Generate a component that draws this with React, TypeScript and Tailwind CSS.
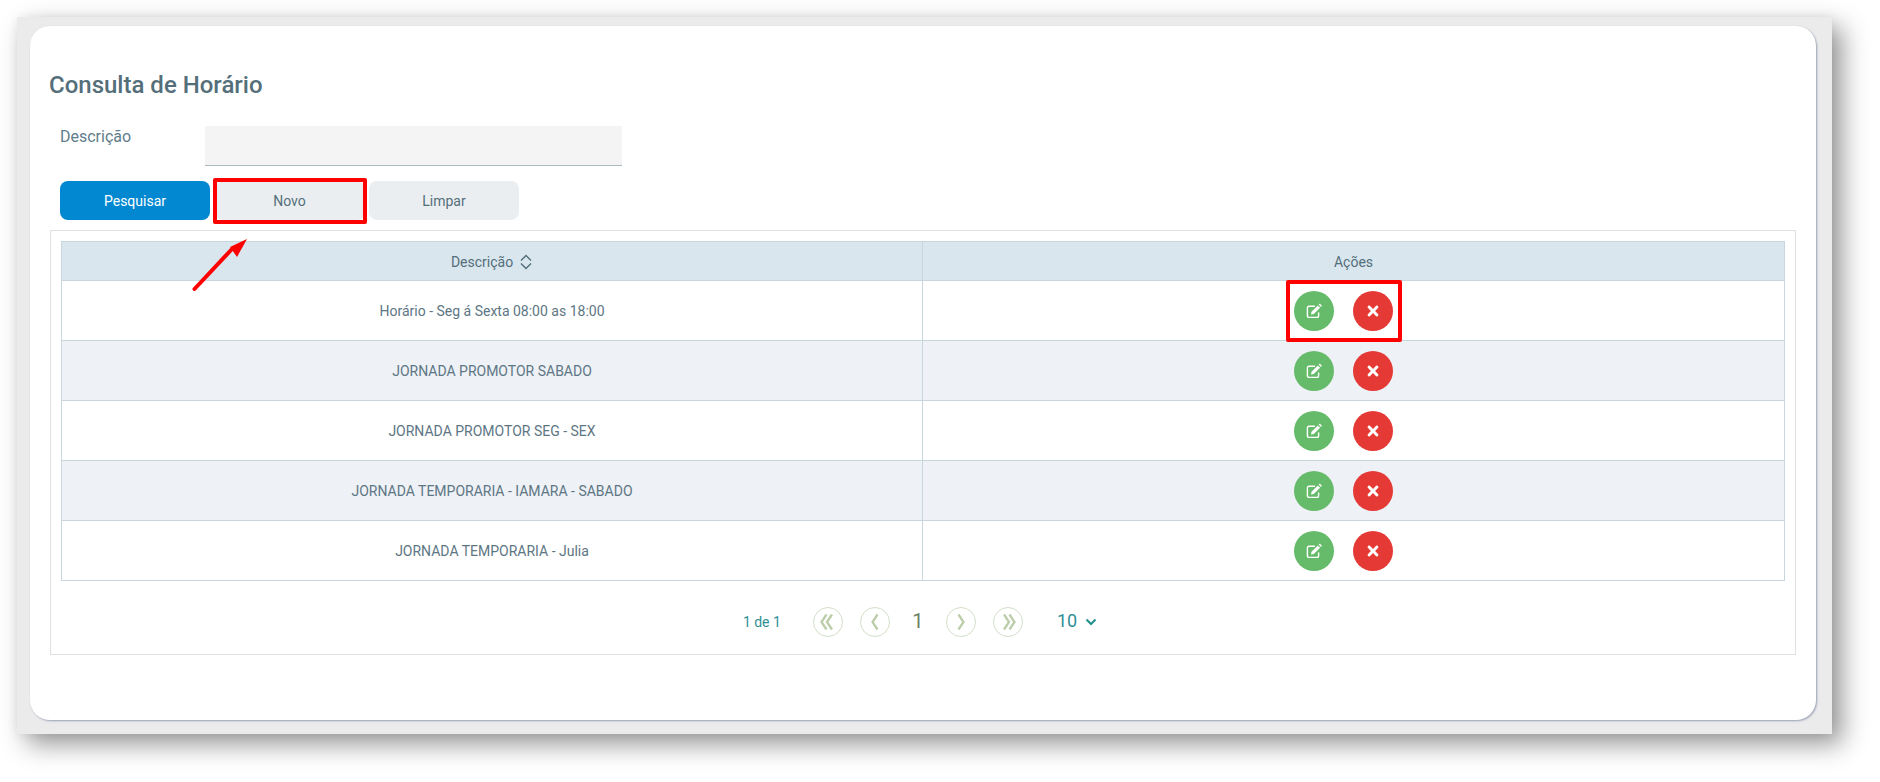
import { FaTimes } from "react-icons/fa";

const rows = [
  "Horário - Seg á Sexta 08:00 as 18:00",
  "JORNADA PROMOTOR SABADO",
  "JORNADA PROMOTOR SEG - SEX",
  "JORNADA TEMPORARIA - IAMARA - SABADO",
  "JORNADA TEMPORARIA - Julia",
];

function EditIcon() {
  return (
    <svg viewBox="0 0 16 16" className="w-4 h-4">
      <path d="M9 3.2H3a1.6 1.6 0 0 0-1.6 1.6v8A1.6 1.6 0 0 0 3 14.4h8a1.6 1.6 0 0 0 1.6-1.6V9.5" fill="none" stroke="white" strokeWidth="1.4" />
      <path d="M5.5 8.7 11.8 2.4l2.3 2.3-6.3 6.3-2.8.5zM12.6 1.6l.7-.6c.3-.2.6-.2.9 0l1.4 1.4c.2.3.2.6 0 .9l-.7.6z" fill="white" />
    </svg>
  );
}

function RowActions() {
  return (
    <>
      <button className="w-10 h-10 rounded-full bg-[#66bb6a] text-white flex items-center justify-center mr-[19px]">
        <EditIcon />
      </button>
      <button className="w-10 h-10 rounded-full bg-[#e53935] text-white flex items-center justify-center mr-[20px]">
        <FaTimes className="w-4 h-4" />
      </button>
    </>
  );
}

function PageButton({ d }: { d: string }) {
  return (
    <button className="w-[30px] h-[30px] rounded-full border border-[#d3dfc8] flex items-center justify-center">
      <svg viewBox="0 0 20 20" className="w-5 h-5" fill="none" stroke="#bccdaa" strokeWidth="2.3">
        <path d={d} />
      </svg>
    </button>
  );
}

export default function App() {
  return (
    <div className="w-[1880px] h-[782px] bg-white pt-[17px] pl-[17px] overflow-hidden font-['Roboto',sans-serif]">
      <div className="w-[1815px] h-[717px] bg-[#ebebeb] pt-[9px] pl-[13px] shadow-[10px_10px_24px_rgba(0,0,0,0.42),0_0_10px_rgba(0,0,0,0.05)]">
        <div className="relative w-[1786px] h-[694px] bg-white rounded-[20px] pt-[43px] pl-[20px] shadow-[1px_1px_2px_rgba(120,130,160,0.7)]">
          <h1 className="text-2xl leading-8 font-medium text-[#546e7a] -ml-[1px]">Consulta de Horário</h1>

          {/* Filtro */}
          <div className="flex mt-[25px] pl-[10px]">
            <label className="w-[145px] text-base leading-[22px] text-[#607d8b]">Descrição</label>
            <input className="w-[417px] h-10 bg-[#f4f4f4] border-b border-[#a9bac0]" />
          </div>

          <div className="flex gap-[4.5px] mt-[15px] pl-[10px] text-sm">
            <button className="w-[150px] h-[39px] rounded-lg bg-[#0288d1] text-white">Pesquisar</button>
            <div className="relative w-[150px] h-[39px]">
              <button className="w-full h-full rounded-lg bg-[#ebeef1] text-[#546e7a]">Novo</button>
              <div className="absolute -left-[2px] -right-[2px] -top-[3px] -bottom-[4px] border-4 border-[#fe0000] rounded-[2px]" />
            </div>
            <button className="w-[150px] h-[39px] rounded-lg bg-[#ebeef1] text-[#546e7a]">Limpar</button>
          </div>

          {/* Lista */}
          <div className="w-[1746px] h-[425px] mt-[10px] border border-[#e0e0e0] pt-[10px] pl-[10px]">
            <table className="w-[1724px] table-fixed border-collapse text-sm text-[#5d7684]">
              <colgroup>
                <col className="w-[861px]" />
                <col />
              </colgroup>
              <thead>
                <tr className="h-[39px] bg-[#d9e6ee] text-[#546e7a]">
                  <th className="font-normal border border-[#c8d6de] pt-[1px]">
                    <span className="inline-flex items-center gap-[6px]">
                      Descrição
                      <svg viewBox="0 0 14 16" className="w-[14px] h-4" fill="none" stroke="#546e7a" strokeWidth="1.4">
                        <path d="M2 6.5 7 1.5l5 5M2 9.5l5 5 5-5" />
                      </svg>
                    </span>
                  </th>
                  <th className="font-normal border border-[#c8d6de] pt-[1px]">Ações</th>
                </tr>
              </thead>
              <tbody>
                {rows.map((r, i) => (
                  <tr key={r} className={i % 2 === 1 ? "h-[60px] bg-[#eef1f6]" : "h-[60px] bg-white"}>
                    <td className="text-center border border-[#c8d6de] pt-[1px]">{r}</td>
                    <td className="border border-[#c8d6de] pt-[1px]">
                      <div className="flex justify-center">
                        {i === 0 ? (
                          <div className="relative flex">
                            <RowActions />
                            <div className="absolute -left-[8px] right-[11px] -top-[11px] -bottom-[11px] border-4 border-[#fe0000] rounded-[2px]" />
                          </div>
                        ) : (
                          <RowActions />
                        )}
                      </div>
                    </td>
                  </tr>
                ))}
              </tbody>
            </table>

            {/* Paginação */}
            <div className="flex items-center justify-center w-[1724px] pr-[6px] mt-[26px] text-[#2f8f96]">
              <span className="text-sm mr-[32px]">1 de 1</span>
              <div className="flex items-center gap-[17px]">
                <PageButton d="M8.5 2.5 3.5 10l5 7.5M14 2.5 9 10l5 7.5" />
                <PageButton d="M12.5 2.5 7.5 10l5 7.5" />
              </div>
              <span className="w-[56px] text-center text-xl text-[#6d7f63] -mt-[3px]">1</span>
              <div className="flex items-center gap-[17px]">
                <PageButton d="M7.5 2.5l5 7.5-5 7.5" />
                <PageButton d="M6 2.5l5 7.5-5 7.5M11.5 2.5l5 7.5-5 7.5" />
              </div>
              <span className="text-lg ml-[34px] -mt-[3px]">10</span>
              <svg viewBox="0 0 12 12" className="w-3 h-3 ml-[8px]" fill="none" stroke="#26938f" strokeWidth="2.2">
                <path d="M1.5 3.5 6 8l4.5-4.5" />
              </svg>
            </div>
          </div>

          {/* Seta */}
          <svg className="absolute left-[160px] top-[210px]" width="60" height="58" viewBox="0 0 60 58">
            <path d="M4.5 53 42 13" stroke="#fe0000" strokeWidth="4" strokeLinecap="round" />
            <path d="M57 3 40 11l7 10z" fill="#fe0000" />
          </svg>
        </div>
      </div>
    </div>
  );
}
